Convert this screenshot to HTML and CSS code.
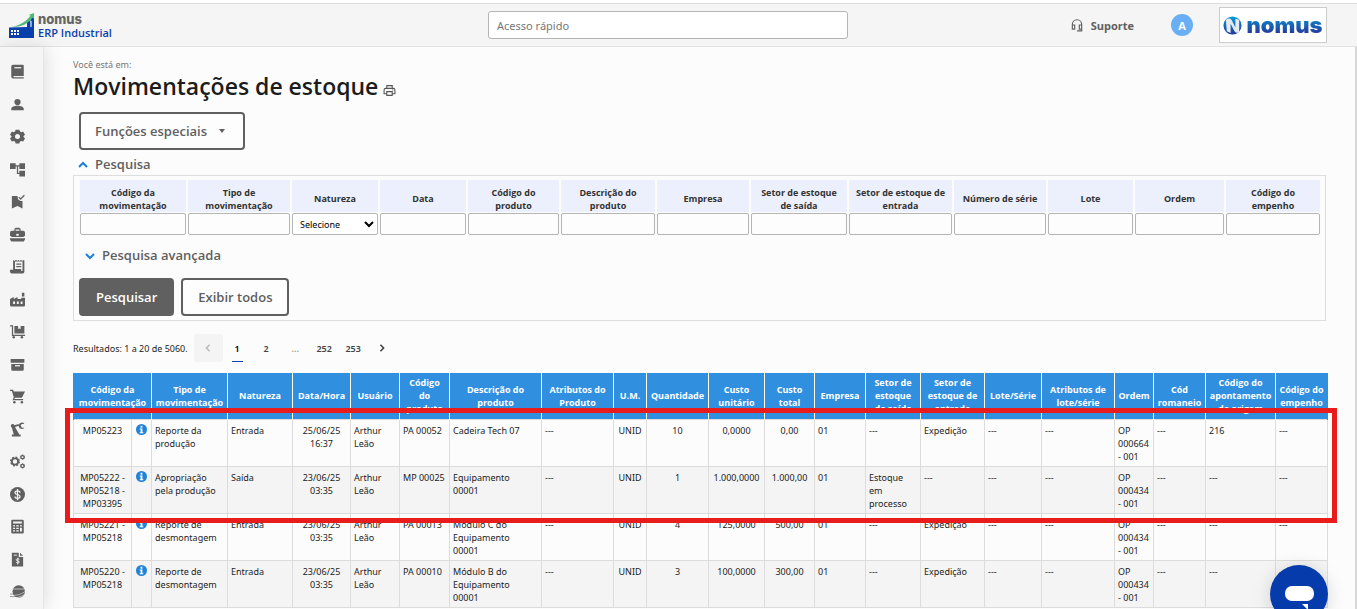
FILE: index.html
```html
<!DOCTYPE html>
<html lang="pt-BR">
<head>
<meta charset="utf-8">
<meta name="viewport" content="width=device-width, initial-scale=1">
<title>Movimentações de estoque</title>
<link rel="stylesheet" href="styles.css">
</head>
<body>
<header class="topbar">
  <a class="brand" href="#">
    <svg class="brand-mark" viewBox="0 0 25 25" aria-hidden="true">
      <path fill="#0a3fae" d="M0 14.500 18 14V9l3.500-2V14L22 5l3-1.500V25H0z"/>
      <path fill="#4dba74" d="M2 14C12 12 18 8 21.500 2.500L19.500 2 25 0v6l-1.500-1.500C19 11 13 14 2 14z"/>
      <path fill="#fff" d="M2 17h2v2H2zM5 17h2v2H5zM8 17h2v2H8zM2 20h2v2H2zM5 20h2v2H5zM8 20h2v2H8zM21.500 8h1v6h-1z"/>
    </svg>
    <span class="brand-text"><span class="brand-name">nomus</span><span class="brand-product">ERP Industrial</span></span>
  </a>
  <input class="quick" type="text" placeholder="Acesso rápido" aria-label="Acesso rápido">
  <div class="account">
    <a class="support" href="#">
      <svg viewBox="0 0 24 24" aria-hidden="true" fill="none" stroke="#606060" stroke-width="2"><path d="M4 19v-8a8 8 0 0 1 16 0v11h-8M4 12h4v7H4zM16 12h4v7h-4z"/></svg>
      Suporte</a>
    <button class="avatar" type="button">A</button>
    <div class="company">
      <svg viewBox="0 0 20 20" aria-hidden="true">
        <defs><linearGradient id="g" x1="0" y1="0" x2="0" y2="1"><stop offset="0" stop-color="#0a9bd8"/><stop offset="1" stop-color="#22389b"/></linearGradient></defs>
        <circle cx="10" cy="10" r="9.500" fill="url(#g)"/>
        <path d="M3 4c4-3 6-1 7 2l3 6V3l4 1v13c-4 2-5-1-6-3L8 8v10l-4-2z" fill="#e4eaf0"/>
      </svg>
      <span>nomus</span>
    </div>
  </div>
</header>
<div class="shell">
  <nav class="sidebar" aria-label="Módulos">
    <a href="#" aria-label="Cadastros"><svg viewBox="0 0 24 24"><path d="M5 1h15a2 2 0 0 1 2 2v16H6a1.500 1.500 0 0 0 0 2h16v2H5a3 3 0 0 1-3-3V4a3 3 0 0 1 3-3z"/><path class="cut" d="M7 5h11v2H7z"/></svg></a>
    <a href="#" aria-label="Pessoas"><svg viewBox="0 0 24 24"><circle cx="12" cy="8" r="5"/><path d="M2 21v-2c0-3 5-5 10-5s10 2 10 5v2z"/></svg></a>
    <a href="#" aria-label="Configurações"><svg viewBox="0 0 24 24"><path d="M9 1h6l1 3 2 1 3-1 3 5-2.500 2.500v1L24 15l-3 5-3-1-2 1-1 3H9l-1-3-2-1-3 1-3-5 2.500-2.500v-1L0 9l3-5 3 1 2-1z"/><circle class="cut" cx="12" cy="12" r="4"/></svg></a>
    <a href="#" aria-label="Fluxos"><svg viewBox="0 0 24 24"><path d="M0 2h9v9H0zM15 2h9v9h-9zM15 14h9v9h-9zM9 5h6v2h-2v10h2v2h-4V7H9z"/></svg></a>
    <a href="#" aria-label="Qualidade"><svg viewBox="0 0 24 24"><path d="M3 3h9c0 5 2 8 8 8v12l-8-4-9 4z"/><path d="m14 5 3 3 6-6" fill="none" stroke="#606060" stroke-width="2"/></svg></a>
    <a href="#" aria-label="Vendas"><svg viewBox="0 0 24 24"><path d="M7 6V4a3 3 0 0 1 3-3h4a3 3 0 0 1 3 3v2h4a3 3 0 0 1 3 3v5l-3 2H3l-3-2V9a3 3 0 0 1 3-3zm2 0h6V4H9zM0 18h24v2l-2 3H2l-2-3z"/><path class="cut" d="M10 11h4v3h-4z"/></svg></a>
    <a href="#" aria-label="Faturamento"><svg viewBox="0 0 24 24"><path d="M5 2h18v18a3 3 0 0 1-3 3H3a3 3 0 0 1-3-3v-3h5z"/><path class="cut" d="M8 4h12v15h-2v-3H8zM7 1h1v2H7zM11 1h1v2h-1zM15 1h1v2h-1zM19 1h1v2h-1z"/><path d="M10 7h8v2h-8zM10 11h8v2h-8z"/></svg></a>
    <a href="#" aria-label="Produção"><svg viewBox="0 0 24 24"><path d="M19 1h4v6h-4zM18 9h6v12a2 2 0 0 1-2 2H2a2 2 0 0 1-2-2V11l6-3v3l6-3v3h6z"/><path class="cut" d="M5 15h3v4H5zM11 15h3v4h-3zM17 15h3v4h-3z"/></svg></a>
    <a href="#" aria-label="Compras"><svg viewBox="0 0 24 24"><path d="M0 2h5v15h19v2H3V4H0zM7 3h16v12H7z"/><path class="cut" d="M13 3h4v5l-2-1-2 1z"/><circle cx="6" cy="21" r="2"/><circle cx="19" cy="21" r="2"/></svg></a>
    <a href="#" aria-label="Estoque"><svg viewBox="0 0 24 24"><path d="M1 3h22v6H1zM2 11h20v9a2 2 0 0 1-2 2H4a2 2 0 0 1-2-2z"/><path class="cut" d="M8 13h8v2H8z"/></svg></a>
    <a href="#" aria-label="Carrinho"><svg viewBox="0 0 24 24"><path d="M0 1h5l1 3h18l-5 10H8l-1 2h14v2H4l2-5L3 3H0z"/><circle cx="7" cy="21" r="2"/><circle cx="19" cy="21" r="2"/></svg></a>
    <a href="#" aria-label="Automação"><svg viewBox="0 0 24 24"><path d="M3 23v-3h3L3 9a3 3 0 1 1 4-4l7-2v3L8 8l7 12h2v3zM14 5a5 5 0 0 1 9-2h-4l-2 2 2 4h4a5 5 0 0 1-9-2z"/></svg></a>
    <a href="#" aria-label="Engenharia"><svg viewBox="0 0 24 24"><g fill="none" stroke="#606060"><circle cx="8" cy="12" r="5" stroke-width="3"/><circle cx="8" cy="12" r="7" stroke-width="2" stroke-dasharray="3 2.500"/><circle cx="20" cy="5" r="2.500" stroke-width="2"/><circle cx="20" cy="5" r="3.500" stroke-dasharray="2 1.500" stroke-width="1.500"/><circle cx="20" cy="19" r="2.500" stroke-width="2"/><circle cx="20" cy="19" r="3.500" stroke-dasharray="2 1.500" stroke-width="1.500"/></g></svg></a>
    <a href="#" aria-label="Financeiro"><svg viewBox="0 0 24 24"><circle cx="12" cy="12" r="12"/><path d="M16 9c0-4-8-4-8 0s8 2 8 6-8 4-8 0M12 3v18" fill="none" stroke="#f5f5f5" stroke-width="2"/></svg></a>
    <a href="#" aria-label="Contabilidade"><svg viewBox="0 0 24 24"><rect x="2" y="1" width="20" height="22" rx="2"/><path class="cut" d="M5 4h14v3H5zM5 10h3v2H5zM10 10h4v2h-4zM16 10h3v2h-3zM5 14h3v2H5zM10 14h4v2h-4zM16 14h3v6h-3zM5 18h3v2H5zM10 18h4v2h-4z"/></svg></a>
    <a href="#" aria-label="Fiscal"><svg viewBox="0 0 24 24"><path d="M3 1h11v7h7v15H3zM16 1l5 5h-5z"/><path d="M15 12c-1-2-6-1-5 1s5 1 5 3-5 2-5 0M12.500 9v11M6 5h5" fill="none" stroke="#f5f5f5" stroke-width="1.500"/></svg></a>
    <a href="#" aria-label="Portal"><svg viewBox="0 0 24 24"><circle cx="14" cy="12" r="10"/><path d="M0 18c10 1 18-1 24-6M1 22c9 1 17-2 22-5M4 8h20" fill="none" stroke="#f5f5f5"/><path d="M0 20c8 1 16-1 22-5M0 16c8 1 16-1 22-5" fill="none" stroke="#606060"/></svg></a>
  </nav>
  <main class="main">
    <p class="crumb">Você está em:</p>
    <div class="title">
      <h1>Movimentações de estoque</h1>
      <button class="print" type="button" aria-label="Imprimir"><svg viewBox="0 0 24 24" fill="none" stroke="#555" stroke-width="2"><path d="M7 8V3h10v5M7 18H2v-7a3 3 0 0 1 3-3h14a3 3 0 0 1 3 3v7h-5M7 14h10v7H7zM17 11h2"/></svg></button>
    </div>
    <button class="btn special" type="button">Funções especiais <span class="caret"></span></button>
    <h2 class="toggle"><svg viewBox="0 0 10 10"><path d="m1 7 4-4 4 4"/></svg>Pesquisa</h2>
    <form class="search">
      <table class="filters">
        <colgroup><col class="w106"><col class="w102"><col class="w86"><col class="w86"><col class="w91"><col class="w94"><col class="w92"><col class="w96"><col class="w103"><col class="w92"><col class="w85"><col class="w89"><col class="w94"></colgroup>
        <tr>
          <th><label for="f1">Código da movimentação</label></th>
          <th><label for="f2">Tipo de movimentação</label></th>
          <th><label for="f3">Natureza</label></th>
          <th><label for="f4">Data</label></th>
          <th><label for="f5">Código do<br>produto</label></th>
          <th><label for="f6">Descrição do produto</label></th>
          <th><label for="f7">Empresa</label></th>
          <th><label for="f8">Setor de estoque<br>de saída</label></th>
          <th><label for="f9">Setor de estoque de entrada</label></th>
          <th><label for="f10">Número de série</label></th>
          <th><label for="f11">Lote</label></th>
          <th><label for="f12">Ordem</label></th>
          <th><label for="f13">Código do<br>empenho</label></th>
        </tr>
        <tr>
          <td><input id="f1" type="text"></td>
          <td><input id="f2" type="text"></td>
          <td><select id="f3"><option>Selecione</option></select></td>
          <td><input id="f4" type="text"></td>
          <td><input id="f5" type="text"></td>
          <td><input id="f6" type="text"></td>
          <td><input id="f7" type="text"></td>
          <td><input id="f8" type="text"></td>
          <td><input id="f9" type="text"></td>
          <td><input id="f10" type="text"></td>
          <td><input id="f11" type="text"></td>
          <td><input id="f12" type="text"></td>
          <td><input id="f13" type="text"></td>
        </tr>
      </table>
      <h2 class="toggle advanced"><svg viewBox="0 0 10 10"><path d="m1 3 4 4 4-4"/></svg>Pesquisa avançada</h2>
      <div class="actions">
        <button class="btn primary" type="button">Pesquisar</button>
        <button class="btn" type="button">Exibir todos</button>
      </div>
    </form>
    <nav class="pager" aria-label="Paginação">
      <span class="count">Resultados: 1 a 20 de 5060.</span>
      <button class="prev" type="button" aria-label="Anterior" disabled><svg viewBox="0 0 10 10"><path d="M7 1 3 5l4 4"/></svg></button>
      <a class="current" href="#">1</a>
      <a href="#">2</a>
      <span class="dots">...</span>
      <a href="#">252</a>
      <a href="#">253</a>
      <a href="#" aria-label="Próxima"><svg viewBox="0 0 10 10"><path d="m3 1 4 4-4 4"/></svg></a>
    </nav>
    <div class="results">
      <table class="grid">
        <colgroup><col class="c58"><col class="c20"><col class="c76"><col class="c65"><col class="c58"><col class="c49"><col class="c50"><col class="c92"><col class="c72"><col class="c33"><col class="c62"><col class="c56"><col class="c50"><col class="c51"><col class="c55"><col class="c64"><col class="c57"><col class="c73"><col class="c39"><col class="c52"><col class="c70"><col class="c52"></colgroup>
        <thead>
          <tr><th colspan="2">Código da movimentação</th><th>Tipo de movimentação</th><th>Natureza</th><th>Data/Hora</th><th>Usuário</th><th>Código<br>do<br>produto</th><th>Descrição do produto</th><th>Atributos do Produto</th><th>U.M.</th><th>Quantidade</th><th>Custo unitário</th><th>Custo total</th><th>Empresa</th><th>Setor de<br>estoque<br>de saída</th><th>Setor de<br>estoque de<br>entrada</th><th>Lote/Série</th><th>Atributos de lote/série</th><th>Ordem</th><th>Cód romaneio</th><th>Código do apontamento de origem</th><th>Código do empenho</th></tr>
        </thead>
        <tbody>
          <tr><td class="c">MP05223</td><td class="i"><svg class="info" viewBox="0 0 12 12"><circle cx="6" cy="6" r="6"/><path d="M5 2h2v2H5zM4 5h3v4h1v1H4V9h1V6H4z"/></svg></td><td>Reporte da produção</td><td>Entrada</td><td class="c">25/06/25 16:37</td><td>Arthur Leão</td><td>PA 00052</td><td class="d">Cadeira Tech 07</td><td>---</td><td class="c">UNID</td><td class="c">10</td><td class="c">0,0000</td><td class="c">0,00</td><td>01</td><td>---</td><td>Expedição</td><td>---</td><td>---</td><td>OP 000664 - 001</td><td>---</td><td>216</td><td>---</td></tr>
          <tr><td class="c">MP05222 - MP05218 - MP03395</td><td class="i"><svg class="info" viewBox="0 0 12 12"><circle cx="6" cy="6" r="6"/><path d="M5 2h2v2H5zM4 5h3v4h1v1H4V9h1V6H4z"/></svg></td><td>Apropriação pela produção</td><td>Saída</td><td class="c">23/06/25 03:35</td><td>Arthur Leão</td><td>MP 00025</td><td class="d">Equipamento 00001</td><td>---</td><td class="c">UNID</td><td class="c">1</td><td class="c">1.000,0000</td><td class="c">1.000,00</td><td>01</td><td>Estoque em processo</td><td>---</td><td>---</td><td>---</td><td>OP 000434 - 001</td><td>---</td><td>---</td><td>---</td></tr>
          <tr><td class="c">MP05221 - MP05218</td><td class="i"><svg class="info" viewBox="0 0 12 12"><circle cx="6" cy="6" r="6"/><path d="M5 2h2v2H5zM4 5h3v4h1v1H4V9h1V6H4z"/></svg></td><td>Reporte de desmontagem</td><td>Entrada</td><td class="c">23/06/25 03:35</td><td>Arthur Leão</td><td>PA 00013</td><td class="d">Módulo C do Equipamento 00001</td><td>---</td><td class="c">UNID</td><td class="c">4</td><td class="c">125,0000</td><td class="c">500,00</td><td>01</td><td>---</td><td>Expedição</td><td>---</td><td>---</td><td>OP 000434 - 001</td><td>---</td><td>---</td><td>---</td></tr>
          <tr><td class="c">MP05220 - MP05218</td><td class="i"><svg class="info" viewBox="0 0 12 12"><circle cx="6" cy="6" r="6"/><path d="M5 2h2v2H5zM4 5h3v4h1v1H4V9h1V6H4z"/></svg></td><td>Reporte de desmontagem</td><td>Entrada</td><td class="c">23/06/25 03:35</td><td>Arthur Leão</td><td>PA 00010</td><td class="d">Módulo B do Equipamento 00001</td><td>---</td><td class="c">UNID</td><td class="c">3</td><td class="c">100,0000</td><td class="c">300,00</td><td>01</td><td>---</td><td>Expedição</td><td>---</td><td>---</td><td>OP 000434 - 001</td><td>---</td><td>---</td><td>---</td></tr>
        </tbody>
      </table>
      <div class="highlight"></div>
    </div>
  </main>
</div>
<button class="chat" type="button" aria-label="Chat"><svg viewBox="0 0 58 58" aria-hidden="true"><rect x="15" y="21" width="29" height="15" rx="7" fill="#fff"/><path d="M32 39h6v6z" fill="#fff"/></svg></button>
</body>
</html>
```
FILE: styles.css
```css
* { box-sizing: border-box; }
body {
  margin: 0;
  height: 100vh;
  display: flex;
  flex-direction: column;
  overflow: hidden;
  border-top: 3px solid #fff;
  background: #fcfcfc;
  color: #1c1c1c;
  font: 9px/13px "Noto Sans", "Open Sans", sans-serif;
}
a { color: inherit; text-decoration: none; }
button, input, select { font: inherit; color: inherit; }
button { cursor: pointer; }
h1, h2, th, .btn, .support, .avatar, .brand-product { font-family: "Open Sans", sans-serif; }

.topbar {
  display: grid;
  grid-template-columns: minmax(0, 1fr) 360px minmax(0, 1fr);
  align-items: center;
  flex: none;
  height: 44px;
  padding: 0 30px 0 9px;
  border-top: 1px solid #ddd;
  border-bottom: 1px solid #e2e2e2;
  background: #f5f5f5;
}
.brand { display: flex; gap: 4px; align-items: center; }
.brand-mark { width: 25px; height: 25px; }
.brand-text { display: flex; flex-direction: column; padding-top: 2px; }
.brand-name { font: 800 13px/13px Inter, sans-serif; color: #666; }
.brand-product { font-size: 11px; font-weight: 600; line-height: 13px; color: #0a3fae; }
.quick {
  height: 28px;
  padding: 0 8px;
  border: 1px solid #b5b5b5;
  border-radius: 3px;
  background: #fff;
  font-size: 11px;
}
.quick::placeholder { color: #777; }
.account { display: flex; justify-content: flex-end; align-items: center; }
.support { display: flex; align-items: center; gap: 7px; font-size: 11px; font-weight: 700; color: #606060; }
.support svg { width: 14px; height: 14px; }
.avatar {
  width: 22px; height: 22px; margin: 0 26px 0 37px; padding: 0;
  border: 0; border-radius: 50%; background: #6aaef5; color: #fff; font-size: 11px; font-weight: 700;
}
.company {
  display: flex; align-items: center; justify-content: center; gap: 4px;
  width: 108px; height: 36px; border: 1px solid #ccc; background: #fff;
}
.company svg { width: 19px; height: 19px; }
.company span {
  font: 900 22px/28px Inter, sans-serif;
  background: linear-gradient(#0a8fd0 20%, #263a9c 80%);
  -webkit-background-clip: text;
  background-clip: text;
  color: transparent;
}

.shell { display: flex; flex: 1; min-height: 0; }
.sidebar {
  display: flex; flex-direction: column; justify-content: space-between;
  flex: none; width: 44px; padding: 17px 19px 10px 10px;
  background: #f5f5f5; border-right: 1px solid #e6e6e6;
  box-shadow: 2px 0 18px rgba(0, 0, 0, .12);
}
.sidebar a, .sidebar svg { display: block; width: 15px; height: 15px; }
.sidebar svg { fill: #606060; }
.sidebar .cut { fill: #f5f5f5; }

.main { flex: 1; min-width: 0; overflow: hidden; padding: 11px 29px 0; border-right: 2px solid #d8d8d8; }
.crumb { margin: 0; color: #777; }
.title { display: flex; align-items: center; gap: 5px; }
h1 { margin: 0; font-size: 23px; font-weight: 600; line-height: 30px; }
.print { border: 0; background: none; padding: 8px 0 0; }
.print svg { display: block; width: 13px; height: 13px; }
.btn {
  height: 38px; padding: 0 15px; border: 2px solid #606060; border-radius: 4px;
  background: #fdfdfd; color: #606060; font-size: 13px; font-weight: 600;
}
.btn.primary { background: #606060; color: #fff; }
.special { display: flex; align-items: center; margin: 11px 0 5px 6px; padding: 0 18px 0 14px; gap: 12px; }
.caret { border: 3px solid transparent; border-top: 4px solid #606060; border-bottom: 0; }
.toggle { display: flex; align-items: center; gap: 7px; margin: 0 0 1px 5px; color: #606060; font-size: 13px; font-weight: 600; line-height: 19px; }
.toggle svg { width: 10px; height: 10px; fill: none; stroke: #1b7fd6; stroke-width: 2; }
.search { border: 1px solid #ddd; padding: 3px 3px 4px 4px; }
.filters { width: 100%; border-collapse: separate; border-spacing: 2px 1px; table-layout: fixed; }
.filters th { height: 32px; padding: 5px 2px 0; background: #ebf0fc; color: #333; }
.filters td { padding: 0; }
.filters input, .filters select { display: block; width: 100%; height: 22px; border: 1px solid #b5b5b5; border-radius: 2px; background: #fdfdfd; }
.filters select { padding: 0 0 0 3px; background: #fff; color: #000; }
.w85 { width: 85px; } .w86 { width: 86px; } .w89 { width: 89px; } .w91 { width: 91px; } .w92 { width: 92px; }
.w94 { width: 94px; } .w96 { width: 96px; } .w102 { width: 102px; } .w103 { width: 103px; } .w106 { width: 106px; }
.advanced { margin: 10px 0 13px 7px; }
.actions { display: flex; gap: 7px; padding-left: 1px; }

.pager { display: flex; align-items: center; height: 28px; margin: 13px 0 11px; color: #444; font-weight: 600; }
.count { color: #1c1c1c; font-weight: 400; margin-right: 6px; }
.pager a, .dots, .prev { display: flex; align-items: center; justify-content: center; width: 29px; height: 28px; }
.prev { border: 0; border-radius: 2px; background: #f4f4f4; color: #bbb; }
.dots { color: #999; }
.pager svg { width: 8px; height: 8px; fill: none; stroke: currentColor; stroke-width: 2; }
.current { background: linear-gradient(#0a3fae, #0a3fae) center bottom / 11px 1px no-repeat; color: #000; }

.results { position: relative; margin-right: 1px; }
.grid { width: 100%; border-collapse: collapse; table-layout: fixed; }
.grid th { height: 46px; padding: 0; border-left: 1px solid #fff; border-right: 1px solid #fff; background: #318fdf; color: #fff; }
.grid th:first-child { border-left-color: #318fdf; }
.grid th:last-child { border-right-color: #318fdf; }
.grid td { padding: 4px 3px 3px; border: 1px solid #dcdcdc; vertical-align: top; }
.grid tbody tr:nth-child(even) { background: #f4f4f4; }
.grid .c { text-align: center; }
.grid .d { padding-right: 12px; }
.grid .i { padding-left: 0; padding-right: 0; }
.info { display: block; width: 11px; height: 11px; margin: 0 auto; fill: #1f83d8; }
.info path { fill: #fff; }
.c20 { width: 20px; } .c33 { width: 33px; } .c39 { width: 39px; } .c49 { width: 49px; } .c50 { width: 50px; }
.c51 { width: 51px; } .c52 { width: 52px; } .c55 { width: 55px; } .c56 { width: 56px; } .c57 { width: 57px; }
.c58 { width: 58px; } .c62 { width: 62px; } .c64 { width: 64px; } .c65 { width: 65px; } .c70 { width: 70px; }
.c72 { width: 72px; } .c73 { width: 73px; } .c76 { width: 76px; } .c92 { width: 92px; }
.highlight { position: absolute; top: 35px; left: -8px; right: -12px; height: 115px; border: 5px solid #e91c1c; }

.chat {
  position: fixed; right: 29px; bottom: -14px; width: 58px; height: 58px; padding: 0;
  border: 0; border-radius: 50%; background: #063bab; box-shadow: 0 2px 18px rgba(0, 0, 0, .15);
}
.chat svg { display: block; width: 58px; height: 58px; }
```
